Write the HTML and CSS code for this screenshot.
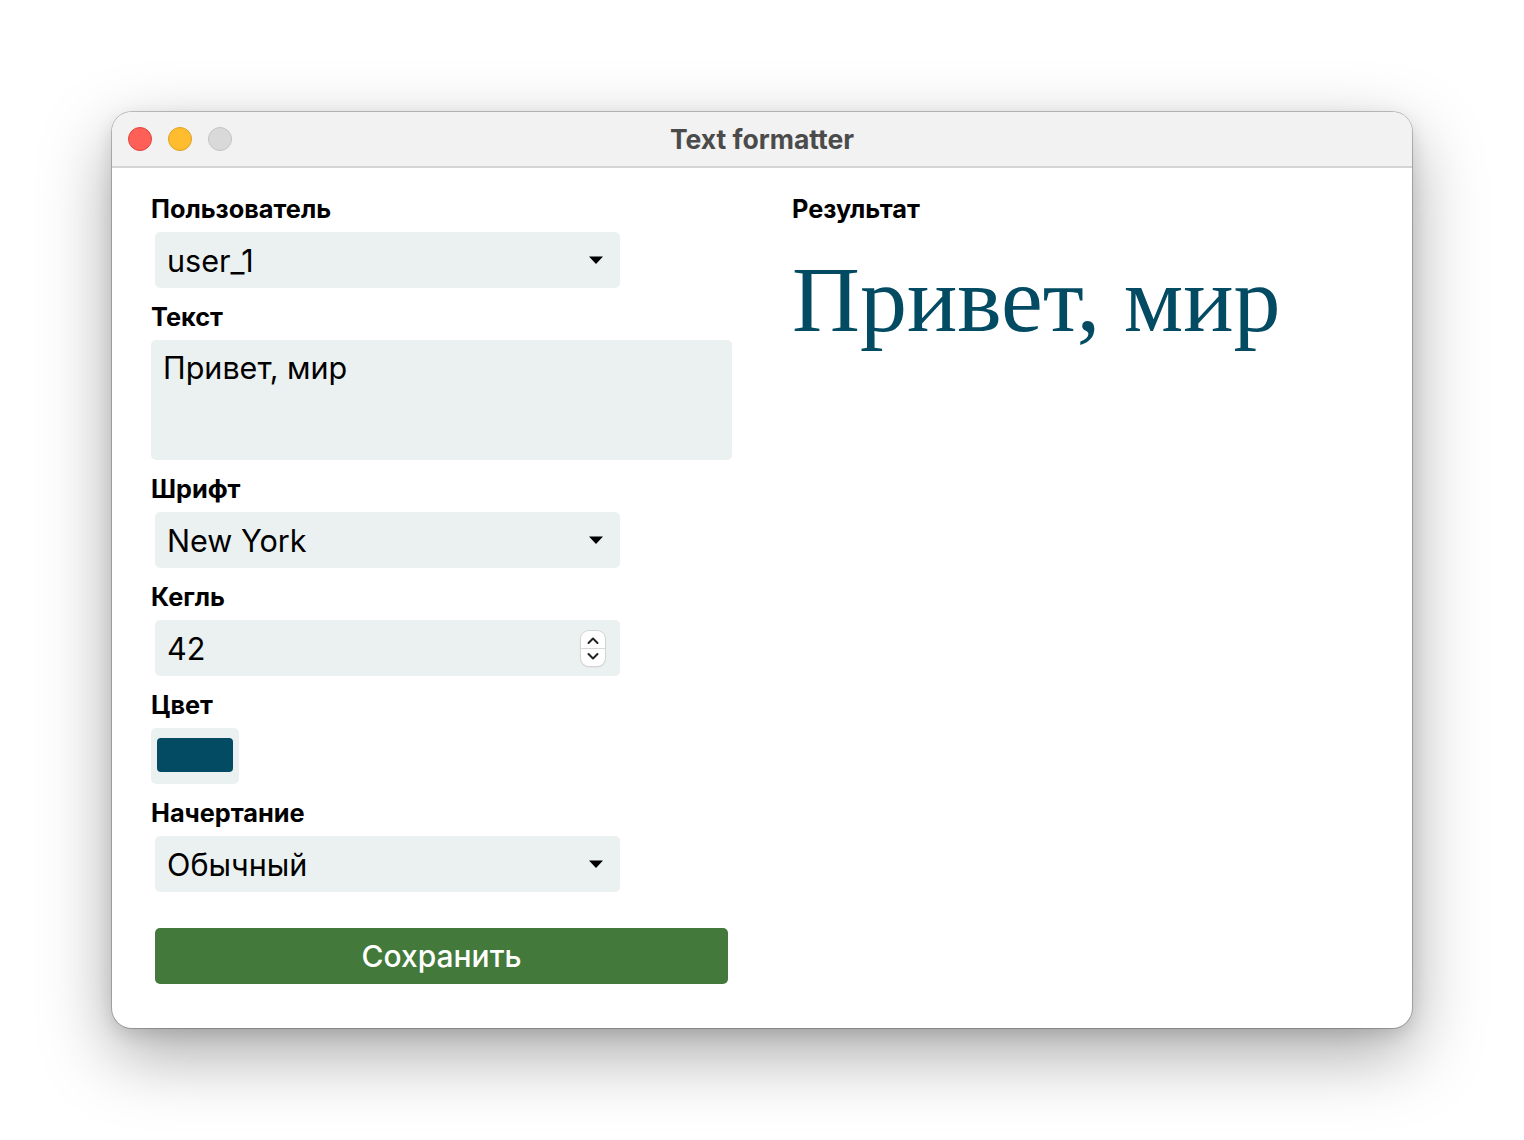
FILE: index.html
```html
<!DOCTYPE html>
<html lang="ru">
<head>
<meta charset="utf-8">
<title>Text formatter</title>
<link rel="stylesheet" href="styles.css">
</head>
<body>
<div class="window">
  <div class="titlebar">
    <div class="lights">
      <span class="light red"></span>
      <span class="light yellow"></span>
      <span class="light gray"></span>
    </div>
    <div class="title">Text formatter</div>
    <div></div>
  </div>
  <div class="content">
    <div class="form">
      <div class="field">
        <div class="label">Пользователь</div>
        <div class="select">
          <span>user_1</span>
          <svg class="arrow" width="16" height="10" viewBox="0 0 16 10"><path d="M1 1.5 L15 1.5 L8 9 Z" fill="#000"/></svg>
        </div>
      </div>
      <div class="field">
        <div class="label">Текст</div>
        <div class="textarea">Привет, мир</div>
      </div>
      <div class="field">
        <div class="label">Шрифт</div>
        <div class="select">
          <span>New York</span>
          <svg class="arrow" width="16" height="10" viewBox="0 0 16 10"><path d="M1 1.5 L15 1.5 L8 9 Z" fill="#000"/></svg>
        </div>
      </div>
      <div class="field">
        <div class="label">Кегль</div>
        <div class="select">
          <span>42</span>
          <div class="stepper">
            <svg width="24" height="35" viewBox="0 0 24 35">
              <path d="M7.5 12 L12 7.5 L16.5 12" fill="none" stroke="#222" stroke-width="2" stroke-linecap="round" stroke-linejoin="round"/>
              <line x1="0" y1="17.5" x2="24" y2="17.5" stroke="#d8d8d8" stroke-width="1"/>
              <path d="M7.5 23 L12 27.5 L16.5 23" fill="none" stroke="#222" stroke-width="2" stroke-linecap="round" stroke-linejoin="round"/>
            </svg>
          </div>
        </div>
      </div>
      <div class="field">
        <div class="label">Цвет</div>
        <div class="color"><div class="swatch"></div></div>
      </div>
      <div class="field">
        <div class="label">Начертание</div>
        <div class="select">
          <span>Обычный</span>
          <svg class="arrow" width="16" height="10" viewBox="0 0 16 10"><path d="M1 1.5 L15 1.5 L8 9 Z" fill="#000"/></svg>
        </div>
      </div>
      <button class="save">Сохранить</button>
    </div>
    <div class="result">
      <div class="label">Результат</div>
      <div class="preview">Привет, мир</div>
    </div>
  </div>
</div>
</body>
</html>
```

FILE: styles.css
```css
html, body {
  margin: 0;
  padding: 0;
  background: #ffffff;
}
body {
  font-family: Inter, "Noto Sans", sans-serif;
  color: #000;
  min-height: 1140px;
  padding-top: 112px;
  box-sizing: border-box;
}
.window {
  width: 1300px;
  height: 916px;
  margin: 0 0 0 112px;
  box-sizing: border-box;
  border-radius: 20px;
  overflow: hidden;
  background: #fff;
  box-shadow: 0 0 0 1px rgba(0,0,0,0.22), 0 26px 70px rgba(0,0,0,0.34), 0 6px 18px rgba(0,0,0,0.12);
  display: flex;
  flex-direction: column;
}
.titlebar {
  height: 56px;
  flex: none;
  box-sizing: border-box;
  background: #f2f2f2;
  border-bottom: 2px solid #d4d4d4;
  display: grid;
  grid-template-columns: 1fr auto 1fr;
  align-items: center;
}
.lights {
  display: flex;
  gap: 16px;
  padding-left: 16px;
}
.light {
  width: 24px;
  height: 24px;
  border-radius: 50%;
  box-sizing: border-box;
}
.red { background: #fe5f57; border: 1px solid #e0443e; }
.yellow { background: #febc2e; border: 1px solid #dea123; }
.gray { background: #d9d9d9; border: 1px solid #c3c3c3; }
.title {
  font-size: 26.5px;
  font-weight: 700;
  color: #4b4b4b;
}
.content {
  display: flex;
  padding: 27px 0 0 39px;
}
.form {
  width: 581px;
  display: flex;
  flex-direction: column;
}
.field {
  display: flex;
  flex-direction: column;
  align-items: flex-start;
  margin-bottom: 15px;
}
.label {
  height: 28px;
  line-height: 28px;
  font-size: 25.3px;
  font-weight: 700;
  margin-bottom: 9px;
  white-space: nowrap;
}
.select {
  margin-left: 4px;
  width: 465px;
  height: 56px;
  box-sizing: border-box;
  background: #ebf0f0;
  border-radius: 5px;
  display: flex;
  align-items: center;
  justify-content: space-between;
  padding: 0 15px 0 12px;
  font-size: 30.6px;
}
.arrow {
  display: block;
  margin-right: 1px;
}
.stepper {
  width: 24px;
  height: 35px;
  box-sizing: border-box;
  background: #fff;
  border-radius: 8px;
  box-shadow: 0 0 0 1px #d4d4d4, 0 1px 2px rgba(0,0,0,0.15);
  display: flex;
}
.textarea {
  width: 581px;
  height: 120px;
  box-sizing: border-box;
  background: #ebf0f0;
  border-radius: 5px;
  padding: 9px 12px;
  font-size: 30.5px;
  line-height: 38px;
}
.color {
  width: 88px;
  height: 56px;
  box-sizing: border-box;
  background: #ebf0f0;
  border-radius: 5px;
  padding: 10px 6px 12px 6px;
}
.swatch {
  width: 100%;
  height: 100%;
  background: #024b62;
  border-radius: 4px;
}
.save {
  margin: 21px 0 0 4px;
  width: 573px;
  height: 56px;
  border: none;
  border-radius: 5px;
  background: #43793a;
  color: #fff;
  font-family: Inter, "Noto Sans", sans-serif;
  font-size: 30px;
  font-weight: 500;
  padding: 0;
}
.result {
  margin-left: 60px;
  display: flex;
  flex-direction: column;
}
.result .label {
  margin-bottom: 0;
}
.preview {
  margin-top: 29px;
  font-family: "Liberation Serif", "DejaVu Serif", serif;
  font-size: 94px;
  line-height: 94px;
  color: #024b62;
  white-space: nowrap;
}
```
